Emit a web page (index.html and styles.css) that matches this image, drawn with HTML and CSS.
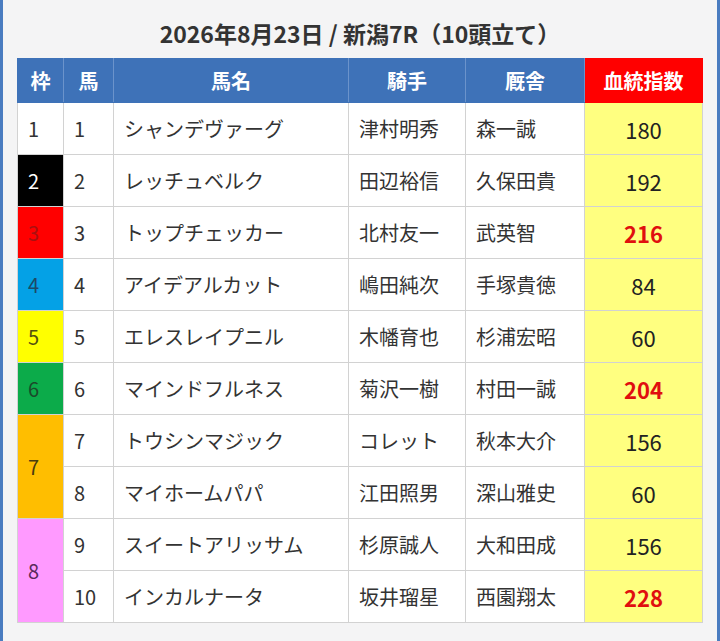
FILE: index.html
```html
<!DOCTYPE html>
<html lang="ja">
<head>
<meta charset="utf-8">
<link rel="stylesheet" href="styles.css">
</head>
<body>
<div class="frame">
  <h2 class="title">2026年8月23日 / 新潟7R（10頭立て）</h2>
  <table class="race">
    <colgroup>
      <col class="c-waku"><col class="c-uma"><col class="c-name"><col class="c-jockey"><col class="c-stable"><col class="c-index">
    </colgroup>
    <thead>
      <tr>
        <th>枠</th><th>馬</th><th>馬名</th><th>騎手</th><th>厩舎</th><th class="th-index">血統指数</th>
      </tr>
    </thead>
    <tbody>
      <tr><td class="waku w1">1</td><td>1</td><td>シャンデヴァーグ</td><td>津村明秀</td><td>森一誠</td><td class="idx">180</td></tr>
      <tr><td class="waku w2">2</td><td>2</td><td>レッチュベルク</td><td>田辺裕信</td><td>久保田貴</td><td class="idx">192</td></tr>
      <tr><td class="waku w3">3</td><td>3</td><td>トップチェッカー</td><td>北村友一</td><td>武英智</td><td class="idx hi">216</td></tr>
      <tr><td class="waku w4">4</td><td>4</td><td>アイデアルカット</td><td>嶋田純次</td><td>手塚貴徳</td><td class="idx">84</td></tr>
      <tr><td class="waku w5">5</td><td>5</td><td>エレスレイプニル</td><td>木幡育也</td><td>杉浦宏昭</td><td class="idx">60</td></tr>
      <tr><td class="waku w6">6</td><td>6</td><td>マインドフルネス</td><td>菊沢一樹</td><td>村田一誠</td><td class="idx hi">204</td></tr>
      <tr><td class="waku w7" rowspan="2">7</td><td>7</td><td>トウシンマジック</td><td>コレット</td><td>秋本大介</td><td class="idx">156</td></tr>
      <tr><td>8</td><td>マイホームパパ</td><td>江田照男</td><td>深山雅史</td><td class="idx">60</td></tr>
      <tr><td class="waku w8" rowspan="2">8</td><td>9</td><td>スイートアリッサム</td><td>杉原誠人</td><td>大和田成</td><td class="idx">156</td></tr>
      <tr><td>10</td><td>インカルナータ</td><td>坂井瑠星</td><td>西園翔太</td><td class="idx hi">228</td></tr>
    </tbody>
  </table>
</div>
</body>
</html>
```

FILE: styles.css
```css
html, body {
  margin: 0;
  padding: 0;
}
body {
  background: #f4f4f5;
  font-family: "Noto Sans CJK JP", "Noto Sans", sans-serif;
  color: #333;
}
.frame {
  box-sizing: border-box;
  width: 720px;
  height: 641px;
  border-left: 3px solid #4a7cc0;
  border-right: 3px solid #4a7cc0;
  background: #f4f4f5;
  padding-top: 18px;
}
.title {
  margin: 0 0 10px;
  font-size: 23px;
  line-height: 30px;
  font-weight: 700;
  text-align: center;
  color: #333;
}
.race {
  border-collapse: collapse;
  width: 685px;
  margin: 0 auto;
  background: #fff;
  table-layout: fixed;
}
.c-waku { width: 46px; }
.c-uma { width: 50px; }
.c-name { width: 235px; }
.c-jockey { width: 117px; }
.c-stable { width: 119px; }
.c-index { width: 118px; }
.race th {
  height: 43px;
  padding: 0;
  background: #3e72b8;
  color: #fff;
  font-size: 20px;
  font-weight: 700;
  text-align: center;
  border: 1px solid #6b93cb;
  border-top-color: #3e72b8;
  border-bottom-color: #3e72b8;
}
.race th:first-child { border-left-color: #3e72b8; }
.race th.th-index {
  background: #ff0000;
  border-color: #ff0000;
}
.race td {
  height: 51px;
  padding: 0 0 0 10px;
  font-size: 20px;
  font-weight: 400;
  color: #333;
  border: 1px solid #d2d2d2;
  white-space: nowrap;
}
.race td.idx {
  padding: 0;
  text-align: center;
  font-size: 22px;
  background: #ffff80;
  color: #222;
}
.race td.idx.hi {
  color: #e00f0f;
  font-weight: 700;
}
.race td.waku { border-color: #d2d2d2; }
.w1 { background: #fff; }
.race td.w2 { background: #000; color: #fff; }
.race td.w3 { background: #ff0000; color: #a81010; }
.race td.w4 { background: #04a1e6; color: #1d4a66; }
.race td.w5 { background: #ffff00; color: #554f10; }
.race td.w6 { background: #0cab4a; color: #1b4a2a; }
.race td.w7 { background: #ffbe00; color: #4a3c10; }
.race td.w8 { background: #ff9aff; color: #5a2a5a; }
```
